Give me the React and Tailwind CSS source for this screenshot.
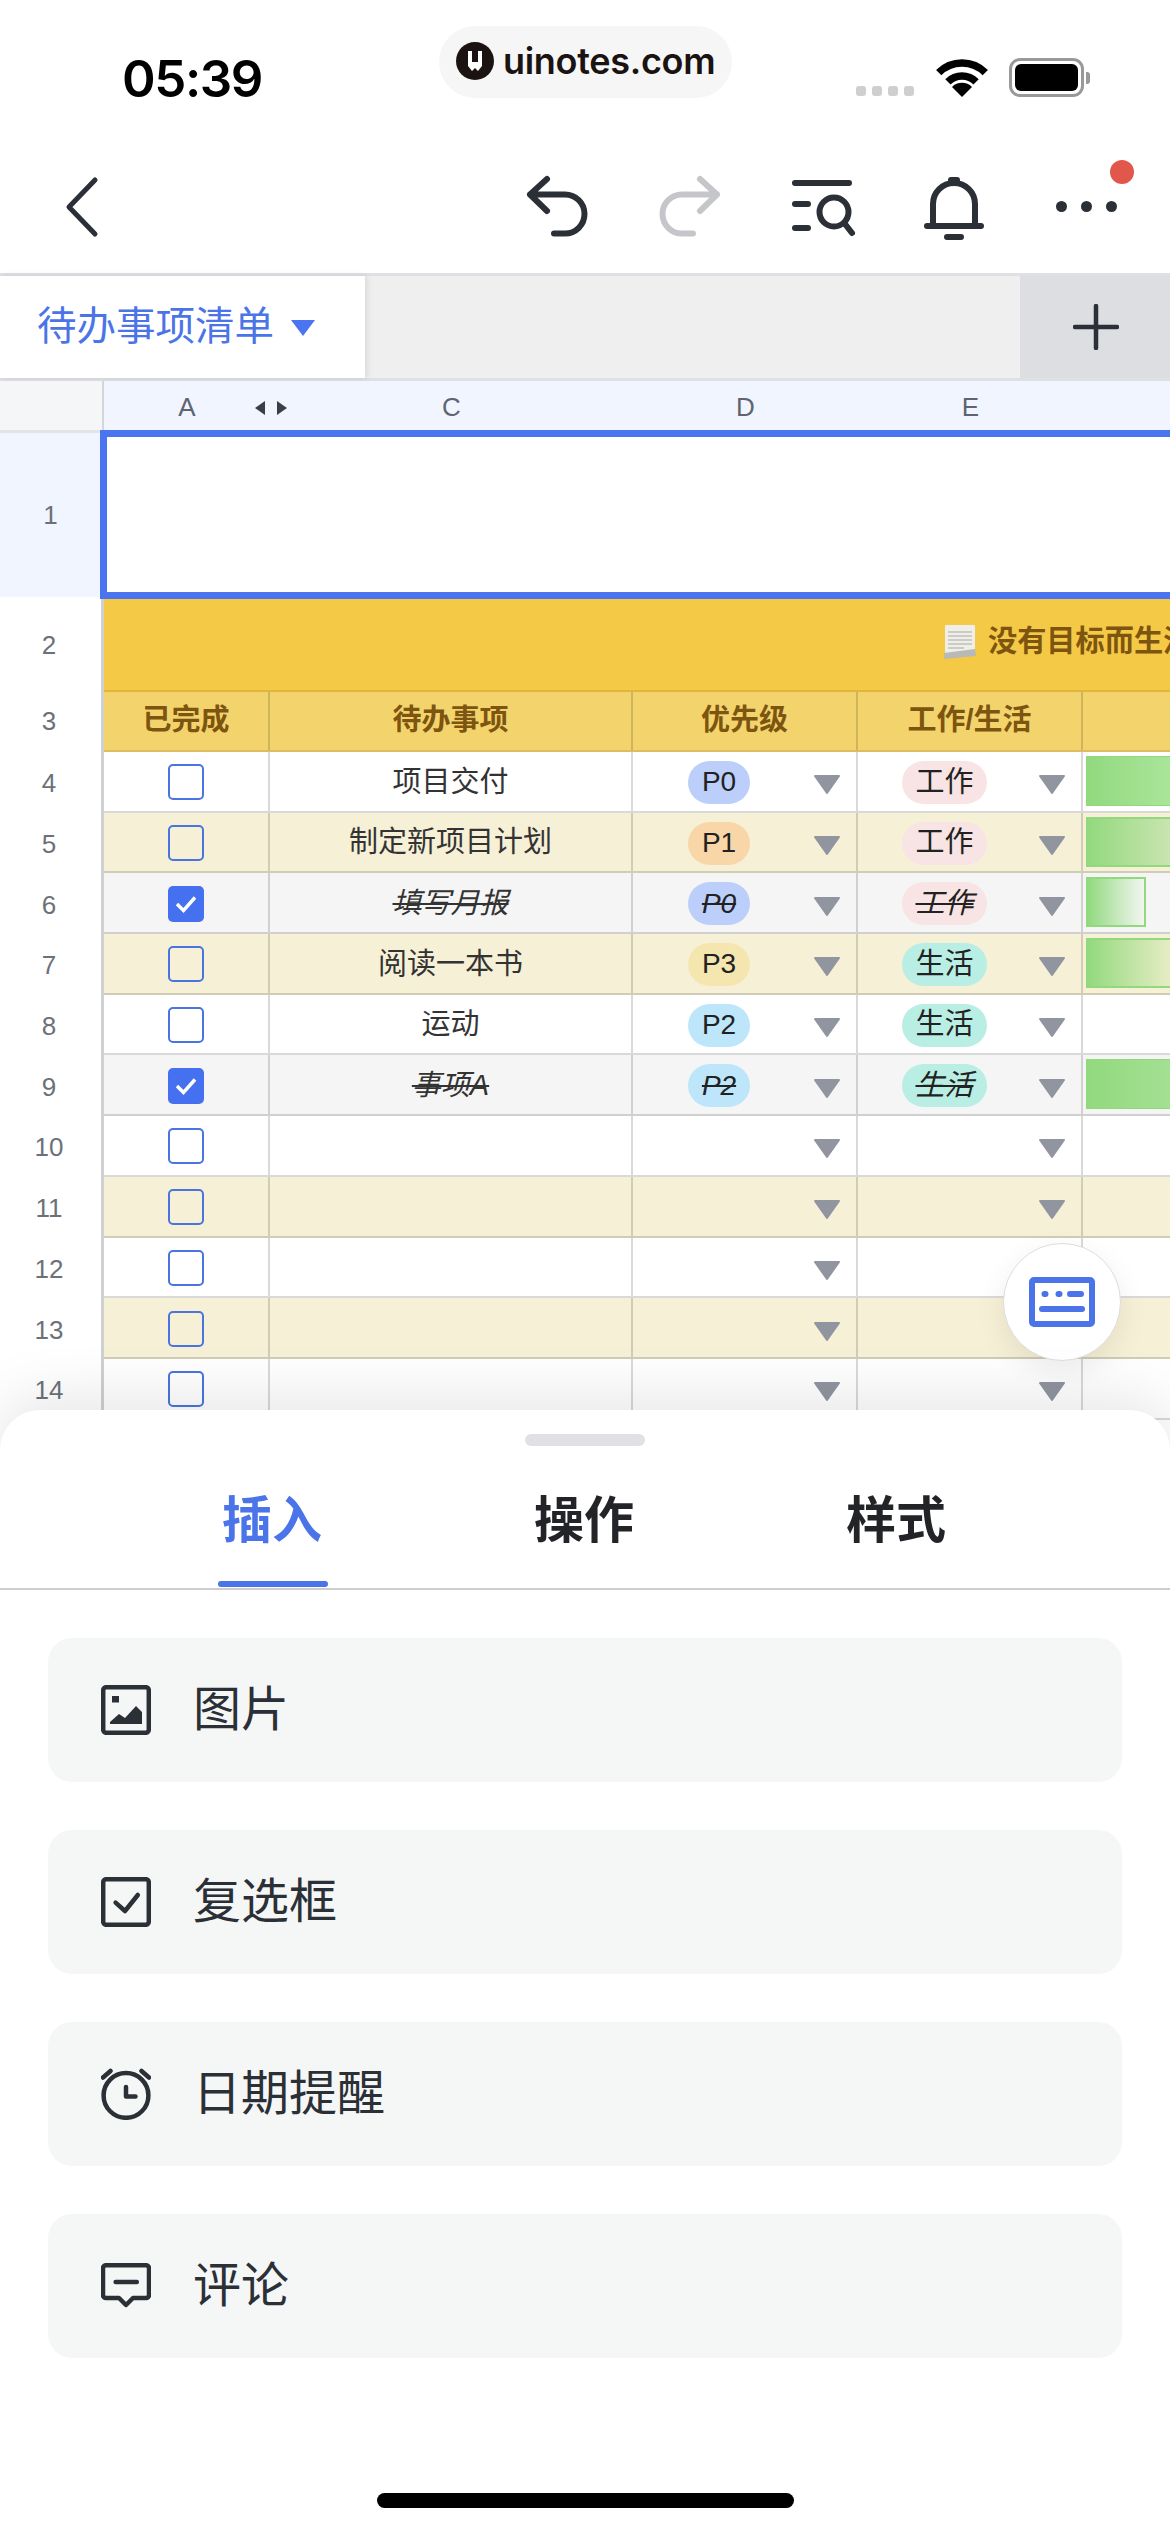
import React from "react";

const ink = "#2b2f36";

const Tri = () => (
  <svg width="28" height="22" viewBox="0 0 28 22" className="ml-auto mr-[15px] mt-[6px] shrink-0">
    <polygon points="2,2 26,2 14,19" fill="#9195a0" stroke="#9195a0" strokeWidth="2" strokeLinejoin="round" />
  </svg>
);

const Check = ({ on }) =>
  on ? (
    <div className="w-[36px] h-[36px] rounded-[5px] bg-[#4570f0] flex items-center justify-center">
      <svg width="24" height="20" viewBox="0 0 24 20">
        <path d="M3 10 L9.5 16.5 L21 3.5" fill="none" stroke="#fff" strokeWidth="3.4" />
      </svg>
    </div>
  ) : (
    <div className="w-[36px] h-[36px] rounded-[5px] border-2 border-[#4a74e0]" />
  );

const rows = [
  { n: 4, bg: "bg-white", text: "项目交付", p: "P0", pc: "bg-[#bccffa]", t: "工作", tc: "bg-[#f8e4e4]", bar: "w-[100px] border border-[#92d97e] from-[#92d97e] to-[#aee79f]" },
  { n: 5, bg: "bg-[#f6f0d6]", text: "制定新项目计划", p: "P1", pc: "bg-[#f8d6a8]", t: "工作", tc: "bg-[#f8e4e4]", bar: "w-[100px] border-2 border-[#92d97e] from-[#92d97e] to-[#d2e6b8]" },
  { n: 6, bg: "bg-[#f5f5f5]", text: "填写月报", done: true, p: "P0", pc: "bg-[#bccffa]", t: "工作", tc: "bg-[#f8e4e4]", bar: "w-[60px] border-2 border-[#92d97e] from-[#92d97e] to-[#f2f5f2]" },
  { n: 7, bg: "bg-[#f6f0d6]", text: "阅读一本书", p: "P3", pc: "bg-[#f5e6b0]", t: "生活", tc: "bg-[#b9eee4]", bar: "w-[100px] border-2 border-[#92d97e] from-[#92d97e] to-[#f3efd0]" },
  { n: 8, bg: "bg-white", text: "运动", p: "P2", pc: "bg-[#bde6fb]", t: "生活", tc: "bg-[#b9eee4]" },
  { n: 9, bg: "bg-[#f5f5f5]", text: "事项A", done: true, p: "P2", pc: "bg-[#bde6fb]", t: "生活", tc: "bg-[#b9eee4]", bar: "w-[100px] border border-[#92d97e] from-[#92d97e] to-[#a6e196]" },
  { n: 10, bg: "bg-white" },
  { n: 11, bg: "bg-[#f6f0d6]" },
  { n: 12, bg: "bg-white" },
  { n: 13, bg: "bg-[#f6f0d6]" },
  { n: 14, bg: "bg-white" },
];

const RowNo = ({ children, className = "" }) => (
  <div className={`w-[104px] shrink-0 bg-white border-r-[3px] border-[#cfd0d3] flex items-center justify-center pr-[3px] text-[26px] text-[#6c7179] ${className}`}>
    {children}
  </div>
);

const Row = ({ r }) => {
  const deco = r.done ? "italic line-through" : "";
  return (
    <div className="flex h-[60.7px] shrink-0">
      <RowNo className="pt-[3px]">{r.n}</RowNo>
      <div className={`flex flex-1 min-w-0 border-b-2 border-black/15 ${r.bg}`}>
        <div className="w-[166px] shrink-0 border-r-2 border-black/15 flex items-center justify-center pt-[2px]">
          <Check on={r.done} />
        </div>
        <div className={`w-[363px] shrink-0 border-r-2 border-black/15 flex items-center justify-center pt-[2px] text-[29px] text-[#333333] ${deco}`}>
          {r.text}
        </div>
        <div className="w-[225px] shrink-0 border-r-2 border-black/15 flex items-center pl-[55px] pt-[2px]">
          {r.p && (
            <div className={`w-[62px] h-[43px] rounded-full flex items-center justify-center text-[28px] text-[#222222] ${r.pc} ${deco}`}>{r.p}</div>
          )}
          <Tri />
        </div>
        <div className="w-[225px] shrink-0 border-r-2 border-black/15 flex items-center pl-[44px] pt-[2px]">
          {r.t && (
            <div className={`w-[85px] h-[43px] rounded-full flex items-center justify-center text-[29px] text-[#222222] ${r.tc} ${deco}`}>{r.t}</div>
          )}
          <Tri />
        </div>
        <div className="flex-1 min-w-0 flex items-center pl-[3px] pb-[1px]">
          {r.bar && <div className={`h-[50px] shrink-0 bg-linear-to-r ${r.bar}`} />}
        </div>
      </div>
    </div>
  );
};

const Icon = ({ w = 50, h = 50, children }) => (
  <svg width={w} height={h} viewBox={`0 0 ${w} ${h}`} fill="none" stroke={ink} strokeWidth="4.5" strokeLinecap="round" strokeLinejoin="round" className="shrink-0">
    {children}
  </svg>
);

const items = [
  {
    label: "图片",
    icon: (
      <Icon>
        <rect x="2.2" y="2.2" width="45.6" height="45.6" rx="3" />
        <rect x="11" y="11" width="7" height="6.5" fill={ink} stroke="none" />
        <polygon points="9,39 9,37 18,29 24,33 35,21 41,27 41,39" fill={ink} stroke="none" />
      </Icon>
    ),
  },
  {
    label: "复选框",
    icon: (
      <Icon>
        <rect x="2.2" y="2.2" width="45.6" height="45.6" rx="3" />
        <path d="M14.6 25.6 L24 34 L36.8 18" />
      </Icon>
    ),
  },
  {
    label: "日期提醒",
    icon: (
      <Icon h={52}>
        <circle cx="25" cy="27.4" r="22.4" />
        <path d="M25 19 V28.6 H34.5" />
        <path d="M2 9.5 L9.5 3 M48 9.5 L40.5 3" />
      </Icon>
    ),
  },
  {
    label: "评论",
    icon: (
      <Icon h={46}>
        <path d="M5 2.2 H45 a3 3 0 0 1 3 3 V32 a3 3 0 0 1 -3 3 H32 L25 42 L18 35 H5 a3 3 0 0 1 -3 -3 V5.2 a3 3 0 0 1 3 -3 Z" />
        <path d="M14.6 19 H35.8" />
      </Icon>
    ),
  },
];

export default function App() {
  return (
    <div className="relative w-[1170px] h-[2532px] overflow-hidden bg-white font-['Liberation_Sans','Noto_Sans_CJK_SC',sans-serif]">
      {/* status bar */}
      <div className="flex items-start h-[130px] pl-[122px]">
        <div className="w-[317px] mt-[53px] font-['Inter',sans-serif] font-semibold text-[51px] tracking-[-1.4px] leading-[51px] text-black">05:39</div>
        <div className="w-[293px] h-[72px] mt-[26px] rounded-[36px] bg-[#f6f6f6] flex items-center pl-[17px] pb-[2px]">
          <svg width="38" height="38" viewBox="0 0 38 38" className="shrink-0">
            <circle cx="19" cy="19" r="19" fill="#1a1311" />
            <path d="M12 9H16V20H22V9H26V24L22 29L19 26L16 29L12 24Z" fill="#fff" />
          </svg>
          <span className="ml-[9px] font-['Inter',sans-serif] font-semibold text-[36px] tracking-[-0.3px] leading-none text-[#1a1311] whitespace-nowrap">uinotes.com</span>
        </div>
        <div className="ml-[124px] mt-[86px] flex gap-[6px]">
          <div className="w-[10px] h-[10px] rounded-[3px] bg-[#cfcfcf]" />
          <div className="w-[10px] h-[10px] rounded-[3px] bg-[#cfcfcf]" />
          <div className="w-[10px] h-[10px] rounded-[3px] bg-[#cfcfcf]" />
          <div className="w-[10px] h-[10px] rounded-[3px] bg-[#cfcfcf]" />
        </div>
        <svg width="52" height="38" viewBox="936 59 52 38" className="ml-[22px] mt-[59px] shrink-0">
          <path d="M938.7 72.7 A33 33 0 0 1 985.3 72.7" fill="none" stroke="#000" strokeWidth="7.5" />
          <path d="M947.9 81.9 A20 20 0 0 1 976.1 81.9" fill="none" stroke="#000" strokeWidth="7.5" />
          <path d="M962 97 L952 87 A14 14 0 0 1 972 87 Z" fill="#000" />
        </svg>
        <div className="ml-[21px] mt-[58px] w-[75px] h-[39px] rounded-[11px] border-[3px] border-[#999999] p-[3px] shrink-0">
          <div className="w-full h-full rounded-[6px] bg-black" />
        </div>
        <div className="ml-[2px] mt-[72px] w-[4px] h-[12px] rounded-r-[3px] bg-[#999999]" />
      </div>

      {/* toolbar */}
      <div className="flex items-start h-[143px] pt-[42px] pl-[64px]">
        <svg width="36" height="68" viewBox="64 172 36 68" fill="none" stroke={ink} strokeWidth="5" strokeLinecap="round" strokeLinejoin="round">
          <path d="M95 180 L69 207 L95 234" />
        </svg>
        <svg width="66" height="68" viewBox="525 172 66 68" fill="none" stroke={ink} strokeWidth="6" strokeLinecap="round" strokeLinejoin="round" className="ml-[425px]">
          <path d="M547 179 L530 194.5 L547 211 M530 194.5 H565 A19.5 19.5 0 0 1 565 233.5 H554" />
        </svg>
        <svg width="66" height="68" viewBox="657 172 66 68" fill="none" stroke="#c4c6c9" strokeWidth="6" strokeLinecap="round" strokeLinejoin="round" className="ml-[66px]">
          <path d="M700 179 L717 194.5 L700 211 M717 194.5 H682 A19.5 19.5 0 0 0 682 233.5 H693" />
        </svg>
        <svg width="66" height="68" viewBox="790 172 66 68" fill="none" stroke={ink} strokeWidth="6" strokeLinecap="round" strokeLinejoin="round" className="ml-[67px]">
          <path d="M795 183 H849 M795 204 H808 M795 228 H808" />
          <circle cx="834" cy="212" r="14.5" />
          <path d="M845 224 L852 233" />
        </svg>
        <svg width="64" height="72" viewBox="922 172 64 72" fill="none" stroke={ink} strokeWidth="6" strokeLinecap="round" strokeLinejoin="round" className="ml-[66px]">
          <path d="M933 226 V204 A21 21 0 0 1 975 204 V226" />
          <path d="M927 226 H981 M947 237 H961" />
          <path d="M951 180 H957" />
        </svg>
        <div className="relative ml-[70px] mt-[29px] flex gap-[14px]">
          <div className="w-[11px] h-[11px] rounded-full bg-[#2b2f36]" />
          <div className="w-[11px] h-[11px] rounded-full bg-[#2b2f36]" />
          <div className="w-[11px] h-[11px] rounded-full bg-[#2b2f36]" />
          <div className="absolute left-[54px] top-[-41px] w-[24px] h-[24px] rounded-full bg-[#e2574c]" />
        </div>
      </div>

      {/* sheet tabs */}
      <div className="flex h-[108px] border-y-[3px] border-[#dfe0e4] bg-[#efefef]">
        <div className="w-[365px] bg-white flex items-center pl-[37px] shadow-[2px_0_6px_rgba(0,0,0,0.1)]">
          <span className="text-[39.5px] leading-none text-[#4a74e8]">待办事项清单</span>
          <svg width="26" height="18" viewBox="0 0 26 18" className="ml-[16px] mt-[2px]">
            <polygon points="1,1 25,1 13,17" fill="#4a74f0" />
          </svg>
        </div>
        <div className="flex-1" />
        <div className="w-[150px] bg-[#dcdee2] flex items-center justify-center pl-[1px]">
          <svg width="46" height="46" viewBox="0 0 46 46" fill="none" stroke={ink} strokeWidth="4.5" strokeLinecap="round">
            <path d="M23 2 V44 M2 23 H44" />
          </svg>
        </div>
      </div>

      {/* column letters */}
      <div className="flex h-[49px] text-[26px] text-[#5e6570]">
        <div className="w-[104px] shrink-0 bg-[#f5f6f7] border-r-2 border-[#d5d6d8]" />
        <div className="flex flex-1 bg-[#f0f5ff]">
          <div className="relative w-[166px] shrink-0 flex items-center justify-center pt-[4px]">
            A
            <svg width="32" height="14" viewBox="0 0 32 14" className="absolute left-[151px] top-[20px]">
              <polygon points="0,7 10,0 10,14" fill="#3a3f47" />
              <polygon points="32,7 22,0 22,14" fill="#3a3f47" />
            </svg>
          </div>
          <div className="w-[363px] shrink-0 flex items-center justify-center pt-[4px]">C</div>
          <div className="w-[225px] shrink-0 flex items-center justify-center pt-[4px]">D</div>
          <div className="w-[225px] shrink-0 flex items-center justify-center pt-[4px]">E</div>
        </div>
      </div>

      {/* row 1 with selection */}
      <div className="flex h-[169px]">
        <div className="w-[100px] h-[167px] shrink-0 bg-[#f0f5ff] border-t-[3px] border-[#e3e4e6] flex items-center justify-center pl-[1px] text-[26px] text-[#6c7179]">1</div>
        <div className="flex-1 min-w-0 -mr-[10px] border-[7px] border-[#4a74f0] bg-white" />
      </div>

      {/* row 2 */}
      <div className="flex h-[93px]">
        <RowNo>2</RowNo>
        <div className="flex-1 min-w-0 bg-[#f4c945] border-b-2 border-[#e2b63c] flex items-center pl-[840px] pb-[5px] overflow-hidden">
          <svg width="32" height="34" viewBox="0 0 32 34" className="shrink-0">
            <rect x="1" y="0" width="30" height="28" fill="#efeee8" />
            <path d="M4 7H28M4 11H28M4 15H28M4 19H28M4 23H20" stroke="#a9a9a4" strokeWidth="1" />
            <path d="M0 34 L0 28 L31 24 L32 31 Z" fill="#b9b9b6" />
          </svg>
          <span className="ml-[12px] text-[29.2px] font-bold text-[#7d5510] whitespace-nowrap">没有目标而生活</span>
        </div>
      </div>

      {/* row 3 */}
      <div className="flex h-[60px]">
        <RowNo className="pb-[2px]">3</RowNo>
        <div className="flex flex-1 min-w-0 bg-[#f3d46c] border-b-2 border-black/10 text-[29px] font-bold text-[#7d5510]">
          <div className="w-[166px] shrink-0 border-r-2 border-black/15 flex items-center justify-center">已完成</div>
          <div className="w-[363px] shrink-0 border-r-2 border-black/15 flex items-center justify-center">待办事项</div>
          <div className="w-[225px] shrink-0 border-r-2 border-black/15 flex items-center justify-center">优先级</div>
          <div className="w-[225px] shrink-0 border-r-2 border-black/15 flex items-center justify-center">工作/生活</div>
        </div>
      </div>

      {rows.map((r) => (
        <Row key={r.n} r={r} />
      ))}

      {/* floating keyboard button */}
      <div className="absolute left-[1003px] top-[1243px] w-[118px] h-[118px] rounded-full bg-white border border-[#dddddd] shadow-[0_10px_30px_rgba(0,0,0,0.08)] flex items-center justify-center">
        <svg width="66" height="50" viewBox="0 0 66 50" fill="none" stroke="#4a74e8" strokeWidth="6" strokeLinecap="round" strokeLinejoin="round">
          <rect x="3" y="3" width="60" height="44" rx="2" />
          <path d="M15.5 17 H16.5 M29.5 17 H30.5 M41 17 H52 M13 32 H53" />
        </svg>
      </div>

      {/* bottom sheet */}
      <div className="absolute inset-x-0 top-[1410px] bottom-0 bg-white rounded-t-[40px] shadow-[0_-12px_60px_rgba(0,0,0,0.1)] flex flex-col">
        <div className="mt-[24px] mx-auto w-[120px] h-[12px] rounded-full bg-[#dfe1e5] shrink-0" />
        <div className="flex h-[144px] pl-[116px] border-b-2 border-[#cdcdcd] text-[50px] font-bold text-[#222428] shrink-0">
          <div className="relative w-[312px] flex justify-center pt-[38px] text-[#4a74e8]">
            插入
            <div className="absolute left-[102px] bottom-[1px] w-[110px] h-[6px] rounded-full bg-[#4a74e8]" />
          </div>
          <div className="w-[312px] flex justify-center pt-[38px]">操作</div>
          <div className="w-[312px] flex justify-center pt-[38px]">样式</div>
        </div>
        <div className="flex flex-col gap-[48px] px-[48px] pt-[48px]">
          {items.map((it) => (
            <div key={it.label} className="h-[144px] rounded-[24px] bg-[#f5f6f6] flex items-center pl-[53px]">
              {it.icon}
              <span className="ml-[42px] text-[48px] leading-none text-[#2b2f36]">{it.label}</span>
            </div>
          ))}
        </div>
        <div className="absolute left-[377px] top-[1083px] w-[417px] h-[15px] rounded-full bg-black" />
      </div>
    </div>
  );
}
